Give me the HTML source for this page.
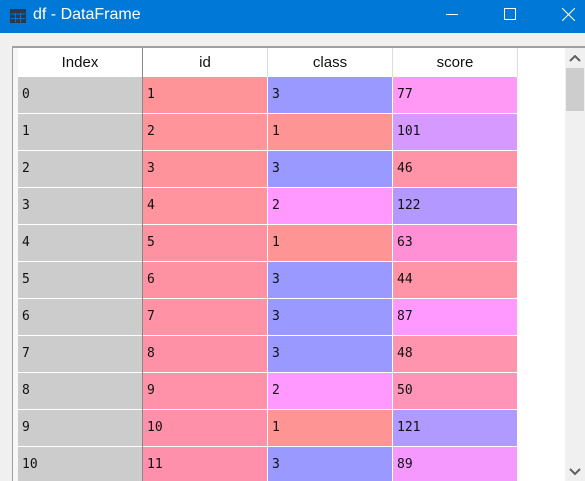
<!DOCTYPE html>
<html><head><meta charset="utf-8"><style>
*{margin:0;padding:0;box-sizing:border-box}
html,body{width:585px;height:481px;overflow:hidden}
body{background:#f0f0f0;position:relative;font-family:"Liberation Sans",sans-serif}
.tb{position:absolute;left:0;top:0;width:585px;height:33px;background:#0078d7;color:#fff;font-size:16px}
.frame{position:absolute;left:12px;top:46px;width:573px;height:435px;border-left:1px solid #a0a0a0;border-top:2px solid #a0a0a0;background:#f7f7f7}
.c{position:absolute;height:36px;font-family:"DejaVu Sans Mono","Liberation Mono",monospace;font-size:13px;line-height:36px;padding-left:4px;color:#111}
.h{position:absolute;top:48px;height:29px;background:#fff;font-size:15px;text-align:center;line-height:29px;color:#111;border-right:1px solid #ddd}
</style></head><body>
<div class="tb">
<svg style="position:absolute;left:10px;top:9px" width="16" height="14" viewBox="0 0 16 14"><rect x="0" y="0" width="16" height="14" fill="#2b3a4a"/><path d="M1 5H15M1 9.5H15M5.5 4V13M10.5 4V13" stroke="#0078d7" stroke-width="1"/></svg>
<div style="position:absolute;left:33px;top:6px">df - DataFrame</div>
<div style="position:absolute;left:446px;top:14px;width:12px;height:1px;background:#fff"></div>
<div style="position:absolute;left:504px;top:8px;width:12px;height:12px;border:1px solid #fff"></div>
<svg style="position:absolute;left:562px;top:8px" width="13" height="13"><path d="M0 0L13 13M13 0L0 13" stroke="#fff" stroke-width="1"/></svg>
</div>
<div class="frame"></div>
<div style="position:absolute;left:18px;top:48px;width:500px;height:433px;background:#fff"></div>
<div style="position:absolute;left:518px;top:48px;width:47px;height:433px;background:#fff"></div>
<div style="position:absolute;left:565px;top:48px;width:20px;height:433px;background:#f0f0f0"></div>
<div style="position:absolute;left:566px;top:68px;width:18px;height:43px;background:#cdcdcd"></div>
<svg style="position:absolute;left:569px;top:55px" width="12" height="8"><path d="M1 6L6 1L11 6" stroke="#606060" stroke-width="2" fill="none"/></svg>
<svg style="position:absolute;left:569px;top:468px" width="12" height="8"><path d="M1 1L6 6L11 1" stroke="#606060" stroke-width="2" fill="none"/></svg>
<div class="h" style="left:18px;width:125px;border-right:1px solid #888">Index</div>
<div class="h" style="left:143px;width:125px">id</div>
<div class="h" style="left:268px;width:125px">class</div>
<div class="h" style="left:393px;width:125px">score</div>
<div id="g"></div>
<script>
var cls=[3,1,3,2,1,3,3,3,2,1,3],sc=[77,101,46,122,63,44,87,48,50,121,89];
var cc={1:"#ff9494",2:"#ff99ff",3:"#9999ff"};
var scc=["#ff99f5","#d699ff","#ff94a8","#b399ff","#ff90d6","#ff94a6","#ff99ff","#ff94ae","#ff94b8","#b099ff","#f599ff"];
var h="";
for(var i=0;i<11;i++){var t=77+i*37;
var idc="rgb(255,"+(148-Math.round(i*0.4))+","+(152+Math.round(i*2))+")";
h+='<div class="c" style="left:18px;top:'+t+'px;width:124px;background:#cccccc">'+i+'</div>';
h+='<div class="c" style="left:143px;top:'+t+'px;width:124px;background:'+idc+'">'+(i+1)+'</div>';
h+='<div class="c" style="left:268px;top:'+t+'px;width:124px;background:'+cc[cls[i]]+'">'+cls[i]+'</div>';
h+='<div class="c" style="left:393px;top:'+t+'px;width:124px;background:'+scc[i]+'">'+sc[i]+'</div>';}
h+='<div style="position:absolute;left:18px;top:77px;width:500px;height:404px;background:#ddd;z-index:-1"></div>';
document.getElementById("g").innerHTML=h;
</script>
<div style="position:absolute;left:142px;top:48px;width:1px;height:433px;background:#888"></div>
</body></html>
